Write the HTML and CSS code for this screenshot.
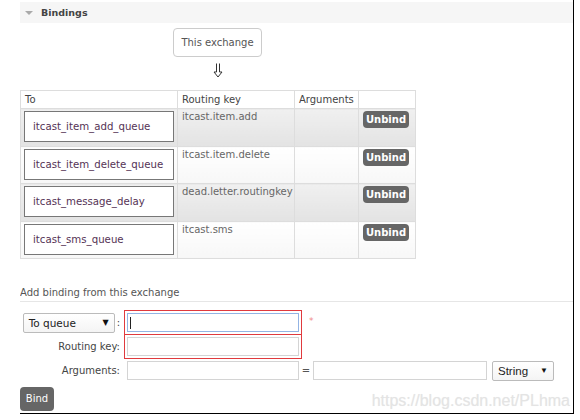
FILE: index.html
```html
<!DOCTYPE html>
<html>
<head>
<meta charset="utf-8">
<link rel="stylesheet" href="styles.css">
</head>
<body>
<div class="page">
  <div class="band"><span class="tri"></span><span class="title">Bindings</span></div>
  <div class="exch-wrap">
    <div class="exch">This exchange</div>
    <div class="arrow"><svg width="10" height="15" viewBox="0 0 10 15"><path d="M3.5 0.5 V9 H1 L5 14 L9 9 H6.5 V0.5" fill="none" stroke="#333" stroke-width="1"/></svg></div>
  </div>
  <table class="bindings">
    <colgroup><col class="c1"><col class="c2"><col class="c3"><col class="c4"></colgroup>
    <thead>
      <tr><th>To</th><th>Routing key</th><th>Arguments</th><th></th></tr>
    </thead>
    <tbody>
      <tr class="odd"><td class="to"><div class="qbox">itcast_item_add_queue</div></td><td class="rk">itcast.item.add</td><td></td><td class="act"><span class="btn unbind">Unbind</span></td></tr>
      <tr class="even"><td class="to"><div class="qbox">itcast_item_delete_queue</div></td><td class="rk">itcast.item.delete</td><td></td><td class="act"><span class="btn unbind">Unbind</span></td></tr>
      <tr class="odd"><td class="to"><div class="qbox">itcast_message_delay</div></td><td class="rk">dead.letter.routingkey</td><td></td><td class="act"><span class="btn unbind">Unbind</span></td></tr>
      <tr class="even"><td class="to"><div class="qbox">itcast_sms_queue</div></td><td class="rk">itcast.sms</td><td></td><td class="act"><span class="btn unbind">Unbind</span></td></tr>
    </tbody>
  </table>
  <div class="sub">Add binding from this exchange</div>
  <div class="form">
    <div class="row">
      <div class="lbl"><div class="sel sel-q">To queue<span class="dd">▼</span></div><span class="colon">:</span></div>
      <div class="field focus mark"><span class="cursor"></span></div>
      <span class="req">*</span>
    </div>
    <div class="row">
      <div class="lbl">Routing key:</div>
      <div class="field mark"></div>
    </div>
    <div class="row">
      <div class="lbl">Arguments:</div>
      <div class="field"></div>
      <span class="eq">=</span>
      <div class="field wide"></div>
      <div class="sel sel-s">String<span class="dd">▼</span></div>
    </div>
  </div>
  <div class="btn bind">Bind</div>
  <div class="wm">https://blog.csdn.net/PLhma</div>
</div>
</body>
</html>
```
FILE: styles.css
```css
html, body {
  margin: 0;
  padding: 0;
  background: #fff;
}
body {
  font-family: "DejaVu Sans", Verdana, sans-serif;
  font-size: 10px;
  color: #444;
}
.page {
  position: relative;
  margin-left: 20px;
  width: 553px;
  height: 413px;
  border-right: 1px solid #000;
  border-bottom: 1px solid #000;
  overflow: hidden;
}
.band {
  margin-top: 2px;
  height: 21px;
  background: #f6f6f6;
  display: flex;
  align-items: center;
  padding-left: 5px;
}
.tri {
  width: 0;
  height: 0;
  border-left: 4px solid transparent;
  border-right: 4px solid transparent;
  border-top: 4px solid #aaa;
  margin-right: 8px;
}
.title {
  font-weight: bold;
  font-size: 9.5px;
  color: #444;
}
.exch-wrap {
  width: 395px;
  text-align: center;
  padding-top: 5px;
}
.exch {
  display: inline-block;
  box-sizing: border-box;
  width: 89px;
  height: 29px;
  line-height: 27px;
  border: 1px solid #ccc;
  border-radius: 4px;
  color: #555;
}
.arrow {
  height: 15px;
  margin-top: 6px;
  line-height: 0;
}
.bindings {
  margin-top: 12px;
  border-collapse: collapse;
  table-layout: fixed;
  width: 395px;
}
.c1 { width: 157px; }
.c2 { width: 117px; }
.c3 { width: 64px; }
.c4 { width: 57px; }
.bindings th,
.bindings td {
  border: 1px solid #ddd;
  padding: 0 0 0 4px;
  text-align: left;
  vertical-align: top;
}
.bindings th {
  height: 17px;
  font-weight: normal;
  color: #444;
  line-height: 17px;
  background: #fff;
}
.bindings td {
  height: 35px;
  padding-top: 2px;
}
.bindings tr.even td {
  height: 34px;
}
.bindings tr.odd td {
  background: linear-gradient(#f0f0f0, #e3e3e3);
}
.bindings tr.even td {
  background: linear-gradient(#ffffff, #f7f7f7);
}
.bindings td.to {
  padding: 2px 3px 0 3px;
}
.qbox {
  box-sizing: border-box;
  height: 31px;
  border: 1px solid #777;
  background: #fff;
  padding-left: 8px;
  line-height: 29px;
  color: #553355;
  white-space: nowrap;
  font-size: 10.2px;
}
.bindings td.rk {
  color: #666;
  line-height: 12px;
  white-space: nowrap;
  overflow: hidden;
}
.btn {
  display: inline-block;
  background: #666;
  color: #fff;
  border-radius: 4px;
  text-align: center;
}
.unbind {
  width: 46px;
  height: 17px;
  line-height: 17px;
  font-weight: bold;
  font-size: 10px;
}
.sub {
  margin-top: 28px;
  line-height: 12px;
  padding-bottom: 2px;
  border-bottom: 1px solid #e6e6e6;
  color: #555;
}
.form {
  margin-top: 11px;
  display: flex;
  flex-direction: column;
  gap: 5px;
}
.row {
  display: flex;
  align-items: center;
  height: 19px;
}
.lbl {
  width: 100px;
  display: flex;
  justify-content: flex-end;
  align-items: center;
  margin-right: 7px;
  color: #444;
}
.colon {
  margin-left: 2px;
}
.sel {
  box-sizing: border-box;
  height: 20px;
  border: 1px solid #bbb;
  border-radius: 2px;
  background: linear-gradient(#fff, #f4f4f4);
  display: flex;
  align-items: center;
  justify-content: space-between;
  padding: 0 5px 0 5px;
  color: #222;
  font-size: 10.5px;
}
.sel-q {
  width: 92px;
}
.sel-s {
  width: 62px;
  margin-left: 5px;
  font-family: "Liberation Sans", Arial, sans-serif;
  font-size: 11.5px;
}
.dd {
  font-size: 8px;
  color: #111;
}
.field {
  box-sizing: border-box;
  width: 172px;
  height: 19px;
  border: 1px solid #d4d4d4;
  background: #fff;
  display: flex;
  align-items: center;
}
.field.wide {
  width: 174px;
}
.field.focus {
  border-color: #93b4e4;
}
.mark {
  outline: 1px solid #e03a3e;
  outline-offset: 2px;
}
.cursor {
  width: 1px;
  height: 12px;
  background: #222;
  margin-left: 2px;
}
.req {
  margin-left: 10px;
  color: #f08a8a;
  font-size: 9px;
  align-self: flex-start;
  margin-top: 3px;
}
.eq {
  width: 14px;
  text-align: center;
  color: #555;
}
.bind {
  margin-top: 7px;
  width: 34px;
  height: 24px;
  line-height: 24px;
}
.wm {
  position: absolute;
  right: 3px;
  bottom: 3px;
  font-family: "Liberation Sans", Arial, sans-serif;
  font-size: 16px;
  color: #e4e4e4;
  text-shadow: 0 0 1px #f0f0f0;
}
```
